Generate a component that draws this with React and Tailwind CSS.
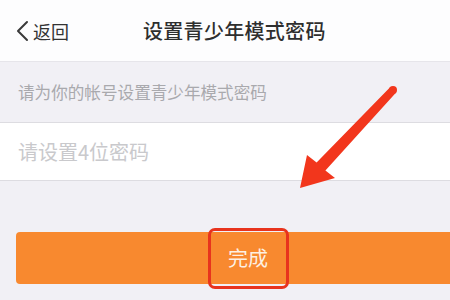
import React from "react";

const font = { fontFamily: '"Noto Sans CJK SC", "Noto Sans", sans-serif' };

const App = () => {
  return (
    <div
      className="relative w-[450px] h-[300px] overflow-hidden bg-[#f1f0f5]"
      style={font}
    >
      {/* Header */}
      <div className="h-[62px] bg-[#fdfdfe] border-b border-[#e6e5ea] flex items-center">
        <div className="flex items-center pl-[14px] w-[130px]">
          <svg width="16" height="22" viewBox="0 0 16 22" className="mr-[3px]">
            <path
              d="M13 2 L4 11 L13 20"
              fill="none"
              stroke="#3a3a3a"
              strokeWidth="2"
              strokeLinecap="round"
              strokeLinejoin="round"
            />
          </svg>
          <span className="text-[18px] text-[#333] leading-none">返回</span>
        </div>
        <span className="ml-[13px] text-[20px] text-[#2e2e2e] font-medium leading-none tracking-[0.3px]">
          设置青少年模式密码
        </span>
      </div>

      {/* Hint row */}
      <div className="h-[61px] flex items-center pl-[18px] border-b border-[#dddce1]">
        <span className="text-[16.6px] text-[#a9a9ad] leading-none">
          请为你的帐号设置青少年模式密码
        </span>
      </div>

      {/* Input row */}
      <div className="h-[58px] bg-white flex items-center pl-[18px] border-b border-[#dddce1]">
        <span className="text-[20px] text-[#c9c9cc] leading-none">请设置4位密码</span>
      </div>

      {/* Button */}
      <div className="pt-[51px] pl-[16px]">
        <div className="w-[464px] h-[52px] rounded-[4px] bg-[#f8892f] flex items-center justify-center">
          <div className="w-[81px] h-[61px] rounded-[7px] border-[3px] border-[#e8331d] flex items-center justify-center">
            <span className="text-[20px] text-[#fdf0e2] leading-none">完成</span>
          </div>
        </div>
      </div>

      {/* Annotation arrow */}
      <svg
        className="absolute left-0 top-0 pointer-events-none"
        width="450"
        height="300"
        viewBox="0 0 450 300"
      >
        <circle cx="393" cy="90" r="4" fill="#f2361c" />
        <polygon
          points="390.1,87.2 395.9,92.8 325.4,170.6 335,178 300,188 307,155 316.6,162.4"
          fill="#f2361c"
        />
      </svg>
    </div>
  );
};

export default App;
